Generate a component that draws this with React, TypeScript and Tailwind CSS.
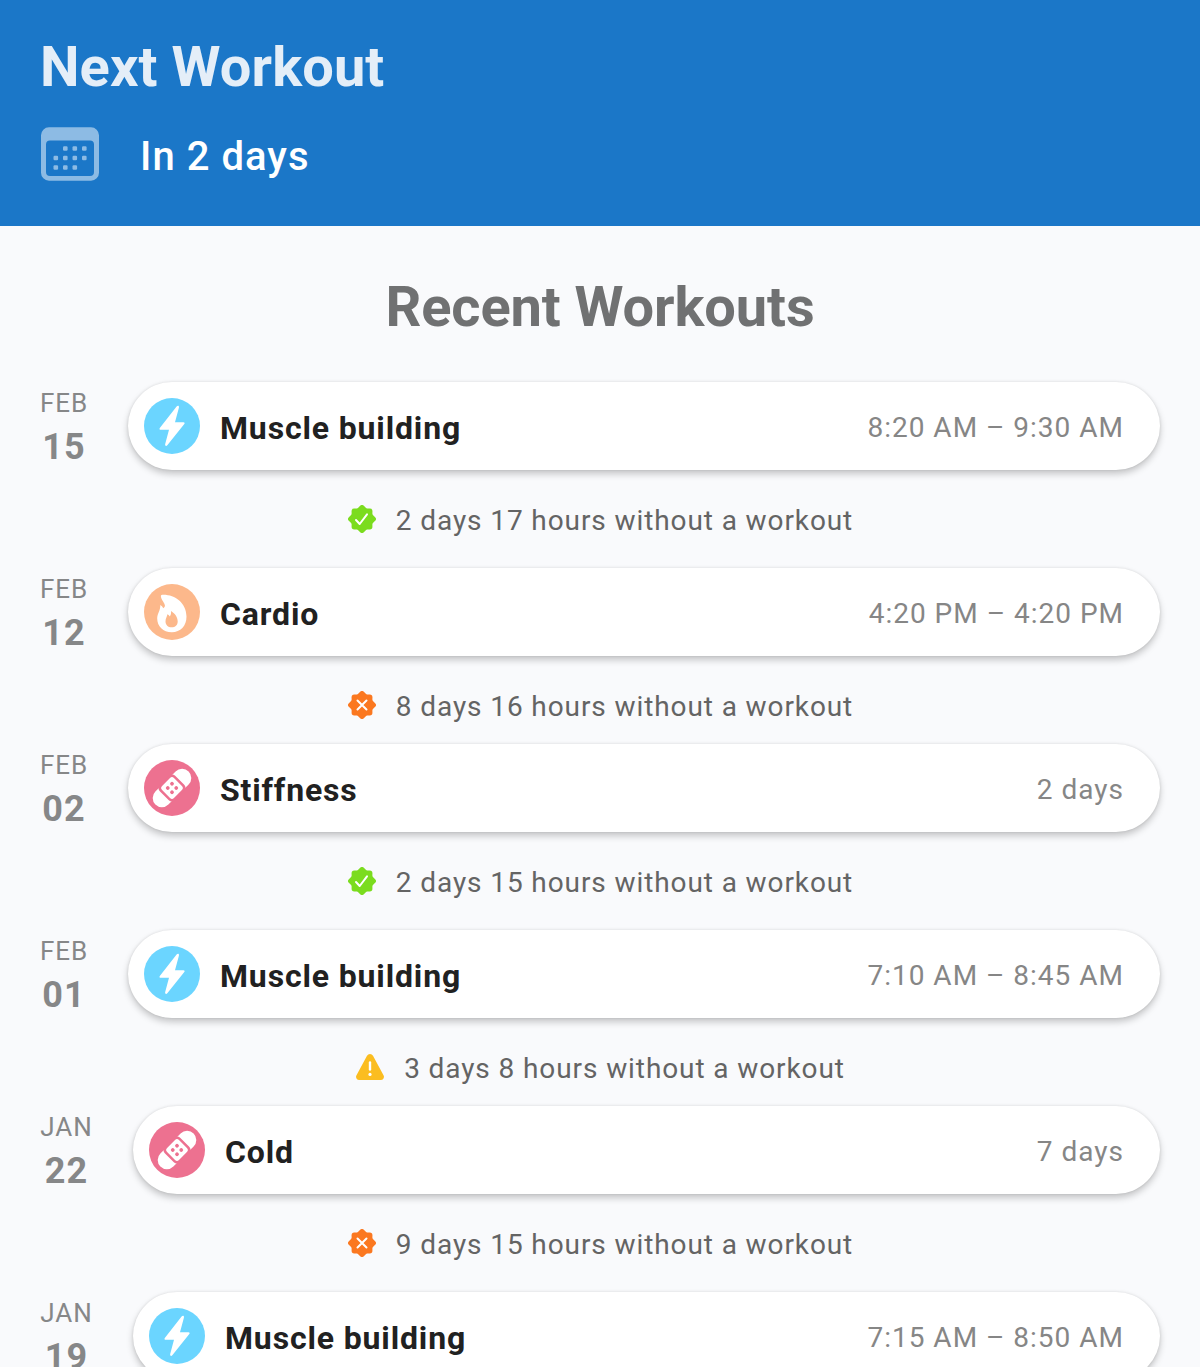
import React from "react";

type Kind = "bolt" | "flame" | "bandage";
type Status = "ok" | "bad" | "warn";

const sans = "font-[Roboto,sans-serif]";

function Calendar() {
  return (
    <svg className="h-[54px] w-[58px] shrink-0" viewBox="0 0 58 54" fill="#fff" fillOpacity="0.5">
      <path
        fillRule="evenodd"
        d="M8 .3h42a8 8 0 0 1 8 8v37.400a8 8 0 0 1-8 8H8a8 8 0 0 1-8-8V8.300a8 8 0 0 1 8-8zM9 13.500a4 4 0 0 0-4 4v27.500a4 4 0 0 0 4 4h40a4 4 0 0 0 4-4V17.500a4 4 0 0 0-4-4z"
      />
      {[[22, 19.2], [31.5, 19.2], [41, 19.2], [12.5, 28.7], [22, 28.7], [31.5, 28.7], [41, 28.7], [12.5, 38.2], [22, 38.2], [31.5, 38.2]].map(([x, y]) => (
        <rect key={`${x}-${y}`} x={x} y={y} width="4.6" height="4.6" rx="1.2" />
      ))}
    </svg>
  );
}

function WorkoutIcon({ kind }: { kind: Kind }) {
  if (kind === "bolt") {
    return (
      <svg className="size-14 shrink-0" viewBox="0 0 56 56">
        <circle cx="28" cy="28" r="28" fill="#6bd5ff" />
        <path
          d="M32.600 8.600 15.800 29.900c-.7.9-.2 1.800.8 1.800h8.400L21.200 46.100c-.5 1.900 1.100 2.500 2.300 1L40.300 26c.7-.9.2-1.800-.8-1.800h-8.500l3.900-14.500c.5-1.900-1.100-2.500-2.300-1.100z"
          fill="#fff"
        />
      </svg>
    );
  }
  if (kind === "flame") {
    return (
      <svg className="size-14 shrink-0" viewBox="0 0 56 56">
        <circle cx="28" cy="28" r="28" fill="#fcb88b" />
        <path
          d="M18.200 10.700C30 10 42.500 18.500 42.500 32.500c0 9.500-6 15.700-14.700 15.700S13.200 42.300 13.200 34.500c0-5.300 3.300-7.700 3.100-13.500 1.500 1 2.500 2 3 3.300.8-.7 1.300-1.300 1.700-2.200-.3-4-3.700-5.800-4.100-9.700-.1-1 .4-1.600 1.300-1.700z"
          fill="#fff"
        />
        <path
          d="M27 27c3.600 2.300 6.700 5.800 6.700 10.400 0 3.500-2.500 5.900-6.100 5.900s-6.100-2.500-6.100-5.900c0-3 1.500-4.300 1.900-7.100 1.200.6 1.900 1.300 2.200 2.200 1.200-1.200 1.700-3.200 1.400-5.500z"
          fill="#fcb88b"
        />
      </svg>
    );
  }
  return (
    <svg className="size-14 shrink-0" viewBox="0 0 56 56">
      <circle cx="28" cy="28" r="28" fill="#ed7190" />
      <g transform="rotate(-45 28 28)">
        <rect x="4.5" y="18.8" width="47" height="18.4" rx="9.2" fill="#fff" />
        <rect x="17.1" y="17.1" width="21.8" height="21.8" rx="4.5" fill="#ed7190" />
        <rect x="19.6" y="19.6" width="16.8" height="16.8" rx="2.8" fill="#fff" />
        {[[25, 25], [31, 25], [25, 31], [31, 31]].map(([x, y]) => (
          <circle key={`${x}-${y}`} cx={x} cy={y} r="1.9" fill="#ed7190" />
        ))}
      </g>
    </svg>
  );
}

function StatusIcon({ status }: { status: Status }) {
  if (status === "warn") {
    return (
      <svg className="size-7 shrink-0" viewBox="0 0 28 28">
        <path d="M11 2.700a3.500 3.500 0 0 1 6 0l10.500 19.500a3.200 3.200 0 0 1-2.800 4.800H3.300a3.200 3.200 0 0 1-2.800-4.800z" fill="#fbbd20" />
        <path d="M14 9.500v7" stroke="#fff" strokeWidth="2.400" strokeLinecap="round" />
        <circle cx="14" cy="21.400" r="1.600" fill="#fff" />
      </svg>
    );
  }
  const fill = status === "ok" ? "#7bdc1e" : "#fb7820";
  return (
    <svg className="size-7 shrink-0" viewBox="0 0 28 28">
      <g fill={fill}>
        <rect x="3.6" y="3.6" width="20.8" height="20.8" rx="2.6" />
        <rect x="3.4" y="3.4" width="21.2" height="21.2" rx="2.6" transform="rotate(45 14 14)" />
      </g>
      <path
        d={status === "ok" ? "M8 15l3.700 4 7.300-9.600" : "M9.500 9.500l9 9M18.500 9.500l-9 9"}
        fill="none"
        stroke="#fff"
        strokeWidth="2"
        strokeLinecap="round"
        strokeLinejoin="round"
      />
    </svg>
  );
}

interface Entry {
  month: "JAN" | "FEB";
  day: string;
  name: string;
  kind: Kind;
  detail: string;
  gap?: { status: Status; text: string; tight?: boolean };
}

const entries: Entry[] = [
  { month: "FEB", day: "15", name: "Muscle building", kind: "bolt", detail: "8:20 AM – 9:30 AM", gap: { status: "ok", text: "2 days 17 hours" } },
  { month: "FEB", day: "12", name: "Cardio", kind: "flame", detail: "4:20 PM – 4:20 PM", gap: { status: "bad", text: "8 days 16 hours", tight: true } },
  { month: "FEB", day: "02", name: "Stiffness", kind: "bandage", detail: "2 days", gap: { status: "ok", text: "2 days 15 hours" } },
  { month: "FEB", day: "01", name: "Muscle building", kind: "bolt", detail: "7:10 AM – 8:45 AM", gap: { status: "warn", text: "3 days 8 hours", tight: true } },
  { month: "JAN", day: "22", name: "Cold", kind: "bandage", detail: "7 days", gap: { status: "bad", text: "9 days 15 hours" } },
  { month: "JAN", day: "19", name: "Muscle building", kind: "bolt", detail: "7:15 AM – 8:50 AM" },
];

const monthWidth = { JAN: "w-[53px]", FEB: "w-12" };

function Row({ entry }: { entry: Entry }) {
  return (
    <>
      <div className="flex h-[88px] items-center px-10">
        <div className={`mr-10 flex shrink-0 flex-col items-center pb-0.5 text-[#868788] ${monthWidth[entry.month]}`}>
          <span className="text-[26px] leading-[44px] tracking-[0.95px]">{entry.month}</span>
          <span className="text-[36px] font-bold leading-[44px] tracking-[1px]">{entry.day}</span>
        </div>
        <div className="flex h-full flex-1 items-center rounded-full bg-white pl-4 pr-9 shadow-[0_4px_7px_rgba(0,0,0,0.21),0_0_3px_rgba(0,0,0,0.1)]">
          <WorkoutIcon kind={entry.kind} />
          <span className="ml-5 mt-1 text-[32px] font-bold tracking-[0.85px] text-[#212121]">{entry.name}</span>
          <span className="ml-auto mt-1 text-[28px] tracking-[1px] text-[#868686]">{entry.detail}</span>
        </div>
      </div>
      {entry.gap && (
        <div className={entry.gap.tight ? "flex h-[88px] items-center justify-center pl-px pt-[10px]" : "flex h-[98px] items-center justify-center pl-px"}>
          <StatusIcon status={entry.gap.status} />
          <span className="ml-5 mt-1 text-[28px] tracking-[0.9px] text-[#646464]">{entry.gap.text} without a workout</span>
        </div>
      )}
    </>
  );
}

export default function App() {
  return (
    <div className={`h-[1367px] w-[1200px] overflow-hidden bg-[#f9fafc] ${sans}`}>
      <header className="h-[226px] bg-[#1b77c8] px-10 pt-[35px]">
        <h1 className="text-[56px] font-bold leading-[64px] tracking-[0.1px] text-[#e4eef8]">Next Workout</h1>
        <div className="mt-[26px] flex items-center pl-px">
          <div className="pb-1.5">
            <Calendar />
          </div>
          <span className="ml-[41px] text-[40px] font-medium leading-[64px] tracking-[1.05px] text-white">In 2 days</span>
        </div>
      </header>
      <h2 className="mt-[49px] text-center text-[56px] font-bold leading-[64px] tracking-[-0.1px] text-[#707172]">Recent Workouts</h2>
      <main className="mt-[43px]">
        {entries.map((entry, i) => (
          <Row key={i} entry={entry} />
        ))}
      </main>
    </div>
  );
}
